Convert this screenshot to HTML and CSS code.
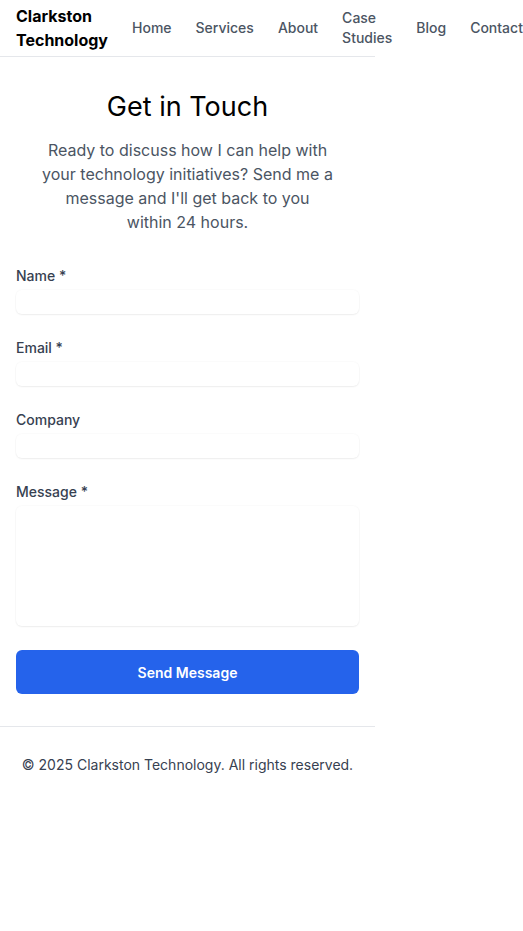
FILE: index.html
```html
<!DOCTYPE html>
<html lang="en">
<head>
<meta charset="utf-8">
<title>Contact - Clarkston Technology</title>
<link rel="stylesheet" href="styles.css">
</head>
<body>
<div class="page">
  <header class="site-header">
    <div class="brand">Clarkston Technology</div>
    <nav class="nav">
      <a href="#">Home</a>
      <a href="#">Services</a>
      <a href="#">About</a>
      <a href="#">Case Studies</a>
      <a href="#">Blog</a>
      <a href="#">Contact</a>
    </nav>
  </header>
  <main class="main">
    <h1 class="title">Get in Touch</h1>
    <p class="lead">Ready to discuss how I can help with your technology initiatives? Send me a message and I'll get back to you within 24 hours.</p>
    <form class="form">
      <div class="field">
        <label class="label">Name *</label>
        <input class="input" type="text">
      </div>
      <div class="field">
        <label class="label">Email *</label>
        <input class="input" type="email">
      </div>
      <div class="field">
        <label class="label">Company</label>
        <input class="input" type="text">
      </div>
      <div class="field">
        <label class="label">Message *</label>
        <textarea class="input textarea"></textarea>
      </div>
      <button class="submit" type="button">Send Message</button>
    </form>
  </main>
  <footer class="footer">© 2025 Clarkston Technology. All rights reserved.</footer>
</div>
</body>
</html>
```
FILE: styles.css
```css
* { box-sizing: border-box; }
html, body { margin: 0; padding: 0; background: #fff; }
body { font-family: Inter, "Noto Sans", Arial, sans-serif; color: #111827; }
.page { width: 375px; }
.site-header {
  height: 57px;
  border-bottom: 1px solid #e5e7eb;
  display: flex;
  align-items: center;
  gap: 24px;
  padding: 0 16px;
}
.brand { font-size: 16px; line-height: 24px; font-weight: 700; color: #000; }
.nav { display: flex; align-items: center; gap: 24px; }
.nav a { font-size: 14px; line-height: 20px; font-weight: 500; color: #4b5563; text-decoration: none; }
.main { padding: 32px 16px 32px; }
.title { margin: 0; font-size: 27px; line-height: 36px; font-weight: 400; color: #000; text-align: center; }
.lead { margin: 13px auto 32px; width: 292px; font-size: 16px; line-height: 24px; color: #4b5563; text-align: center; }
.form { display: flex; flex-direction: column; gap: 24px; }
.field { display: flex; flex-direction: column; gap: 4px; }
.label { font-size: 14px; line-height: 20px; font-weight: 500; color: #374151; }
.input {
  display: block; width: 100%; height: 24px; border: 0; border-radius: 6px;
  box-shadow: 0 1px 2px 0 rgba(0,0,0,0.06), 0 0 0 1px rgba(0,0,0,0.015);
  background: #fff; font: inherit; font-size: 14px; padding: 0 8px; margin: 0;
}
.textarea { height: 120px; resize: none; padding: 8px; }
.submit {
  height: 44px; width: 100%; border: 0; border-radius: 6px; background: #2563eb; color: #fff;
  font-family: inherit; font-size: 14px; font-weight: 600; cursor: pointer;
}
.footer {
  border-top: 1px solid #e5e7eb; padding: 28px 16px; text-align: center;
  font-size: 14px; line-height: 20px; color: #374151;
}
```
